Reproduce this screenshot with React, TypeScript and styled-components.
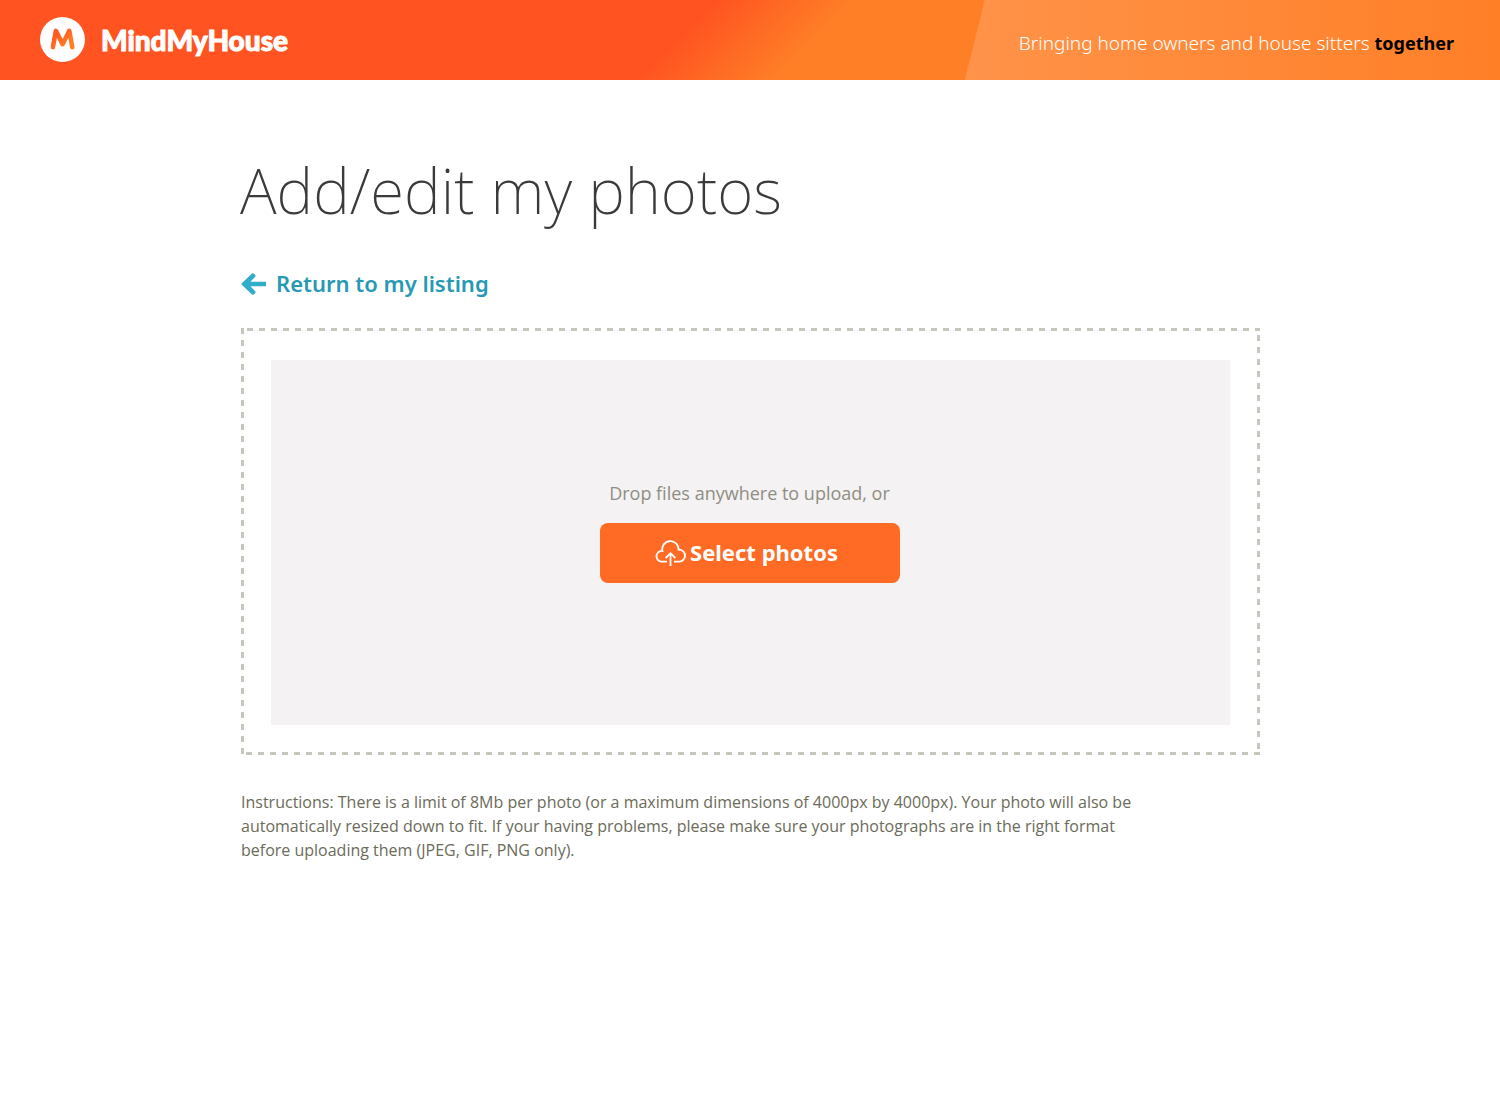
import React, { useId } from "react";
import styled, { createGlobalStyle } from "styled-components";

const colors = {
  brand: "#ff5421",
  brandLight: "#ff7f27",
  button: "#ff6b24",
  link: "#2699b5",
  arrow: "#30adc9",
  heading: "#3b3a39",
  muted: "#8f8e82",
  body: "#6b6b59",
  dash: "#c6c6bd",
  panel: "#f4f2f3",
};

const GlobalStyle = createGlobalStyle`
  *, *::before, *::after { box-sizing: border-box; }
  body {
    margin: 0;
    background: #fff;
    font-family: "Noto Sans", "Open Sans", sans-serif;
  }
`;

const Header = styled.header`
  display: flex;
  justify-content: space-between;
  min-height: 80px;
  background: linear-gradient(
    135deg,
    ${colors.brand} 0%,
    ${colors.brand} calc(50% - 51px),
    ${colors.brandLight} calc(50% + 47px)
  );
`;

const Brand = styled.a`
  display: flex;
  align-items: center;
  gap: 15px;
  padding-left: 40px;
  color: #fff;
  text-decoration: none;
`;

const Wordmark = styled.span`
  font: 900 28px/40px Lato, "Noto Sans", sans-serif;
  -webkit-text-stroke: 1px #fff;
  stroke-linejoin: round;
`;

const Tagline = styled.p`
  display: flex;
  align-items: center;
  margin: 0;
  padding: 6px 46px 0 54px;
  color: #fff;
  font-size: 19px;
  font-weight: 300;
  line-height: 28px;
  white-space: pre;
  background: linear-gradient(90deg, #ff9349, ${colors.brandLight});
  clip-path: polygon(20px 0, 100% 0, 100% 100%, 0 100%);

  strong {
    color: #000;
    font-size: 18px;
    font-weight: 700;
  }
`;

const Main = styled.main`
  max-width: 1020px;
  margin: 0 auto;
  padding: 70px 0 48px;
`;

const Title = styled.h1`
  margin: 0 0 32px;
  color: ${colors.heading};
  font-size: 62px;
  font-weight: 200;
  line-height: 80px;
`;

const Content = styled.div`
  padding-left: 1px;
`;

const BackLink = styled.a`
  display: inline-flex;
  align-items: center;
  gap: 10px;
  color: ${colors.link};
  font-size: 22px;
  font-weight: 600;
  line-height: 42px;
  text-decoration: none;
`;

const DropZone = styled.section`
  --h: linear-gradient(90deg, ${colors.dash} 50%, transparent 50%);
  --v: linear-gradient(180deg, ${colors.dash} 50%, transparent 50%);
  margin-top: 24px;
  padding: 32px 30px 30px;
  background:
    var(--h) 6px 0 / 12px 3px repeat-x,
    var(--h) 5px 100% / 12px 3px repeat-x,
    var(--v) 0 0 / 3px 12px repeat-y,
    var(--v) 100% 7px / 3px 12px repeat-y;
`;

const DropPanel = styled.div`
  display: flex;
  flex-direction: column;
  align-items: center;
  justify-content: center;
  gap: 16px;
  min-height: 365px;
  padding: 0 2px 24px 0;
  background: ${colors.panel};
`;

const DropHint = styled.p`
  margin: 0;
  color: ${colors.muted};
  font-family: "Open Sans", "Noto Sans", sans-serif;
  font-size: 18px;
  line-height: 28px;
`;

const SelectButton = styled.button`
  display: flex;
  align-items: center;
  justify-content: center;
  gap: 4px;
  width: 300px;
  height: 60px;
  padding: 0 6px 2px 0;
  border: 0;
  border-radius: 8px;
  color: #fff;
  background: ${colors.button};
  font: 700 22px/30px "Noto Sans", "Open Sans", sans-serif;
  cursor: pointer;
`;

const Instructions = styled.p`
  max-width: 900px;
  margin: 35px 0 0;
  color: ${colors.body};
  font-family: "Open Sans", "Noto Sans", sans-serif;
  font-size: 16px;
  line-height: 24px;
`;

function LogoMark() {
  const id = useId();
  return (
    <svg width="46" height="46" viewBox="0 0 46 46" aria-hidden="true">
      <defs>
        <linearGradient id={id} x1="0" y1="0" x2="1" y2="1">
          <stop offset="0.2" stopColor="#ff5a22" />
          <stop offset="0.8" stopColor="#ff7f27" />
        </linearGradient>
      </defs>
      <circle cx="22.5" cy="22.5" r="22.5" fill="#fff" />
      <path
        d="M12.9 30.2 L15.9 13.9 L22.6 27.2 L29.3 13.9 L32.3 30.2"
        fill="none"
        stroke={`url(#${id})`}
        strokeWidth="4.6"
        strokeLinecap="round"
        strokeLinejoin="round"
      />
    </svg>
  );
}

function ArrowLeft() {
  return (
    <svg width="25" height="24" viewBox="0 -2 25 24" aria-hidden="true">
      <path
        d="M0 11 L11 0.6 Q12 -0.2 13 0.8 L14.2 2 Q15 3 14 4 L9.4 8.8 H25 V13.2 H9.4 L14 18 Q15 19 14.2 20 L13 21.2 Q12 22.2 11 21.4 Z"
        fill={colors.arrow}
      />
    </svg>
  );
}

function CloudUpload() {
  return (
    <svg width="31" height="28" viewBox="0 -2 31 28" aria-hidden="true">
      <g fill="none" stroke="#fff" strokeWidth="1.8">
        <path d="M12 21.6 H6.2 A5.3 5.3 0 0 1 7.4 11 A8.2 8.2 0 1 1 23.6 9.6 A6 6 0 0 1 24.4 21.6 H19" />
        <path d="M15.5 26 V13.6 M10.7 18 L15.5 13.2 L20.3 18" />
      </g>
    </svg>
  );
}

export default function App() {
  return (
    <>
      <GlobalStyle />
      <Header>
        <Brand href="#">
          <LogoMark />
          <Wordmark>MindMyHouse</Wordmark>
        </Brand>
        <Tagline>
          Bringing home owners and house sitters <strong>together</strong>
        </Tagline>
      </Header>
      <Main>
        <Title>Add/edit my photos</Title>
        <Content>
          <BackLink href="#">
            <ArrowLeft />
            Return to my listing
          </BackLink>
          <DropZone>
            <DropPanel>
              <DropHint>Drop files anywhere to upload, or</DropHint>
              <SelectButton type="button">
                <CloudUpload />
                Select photos
              </SelectButton>
            </DropPanel>
          </DropZone>
          <Instructions>
            Instructions: There is a limit of 8Mb per photo (or a maximum dimensions of 4000px by
            4000px). Your photo will also be automatically resized down to fit. If your having
            problems, please make sure your photographs are in the right format before uploading
            them (JPEG, GIF, PNG only).
          </Instructions>
        </Content>
      </Main>
    </>
  );
}
